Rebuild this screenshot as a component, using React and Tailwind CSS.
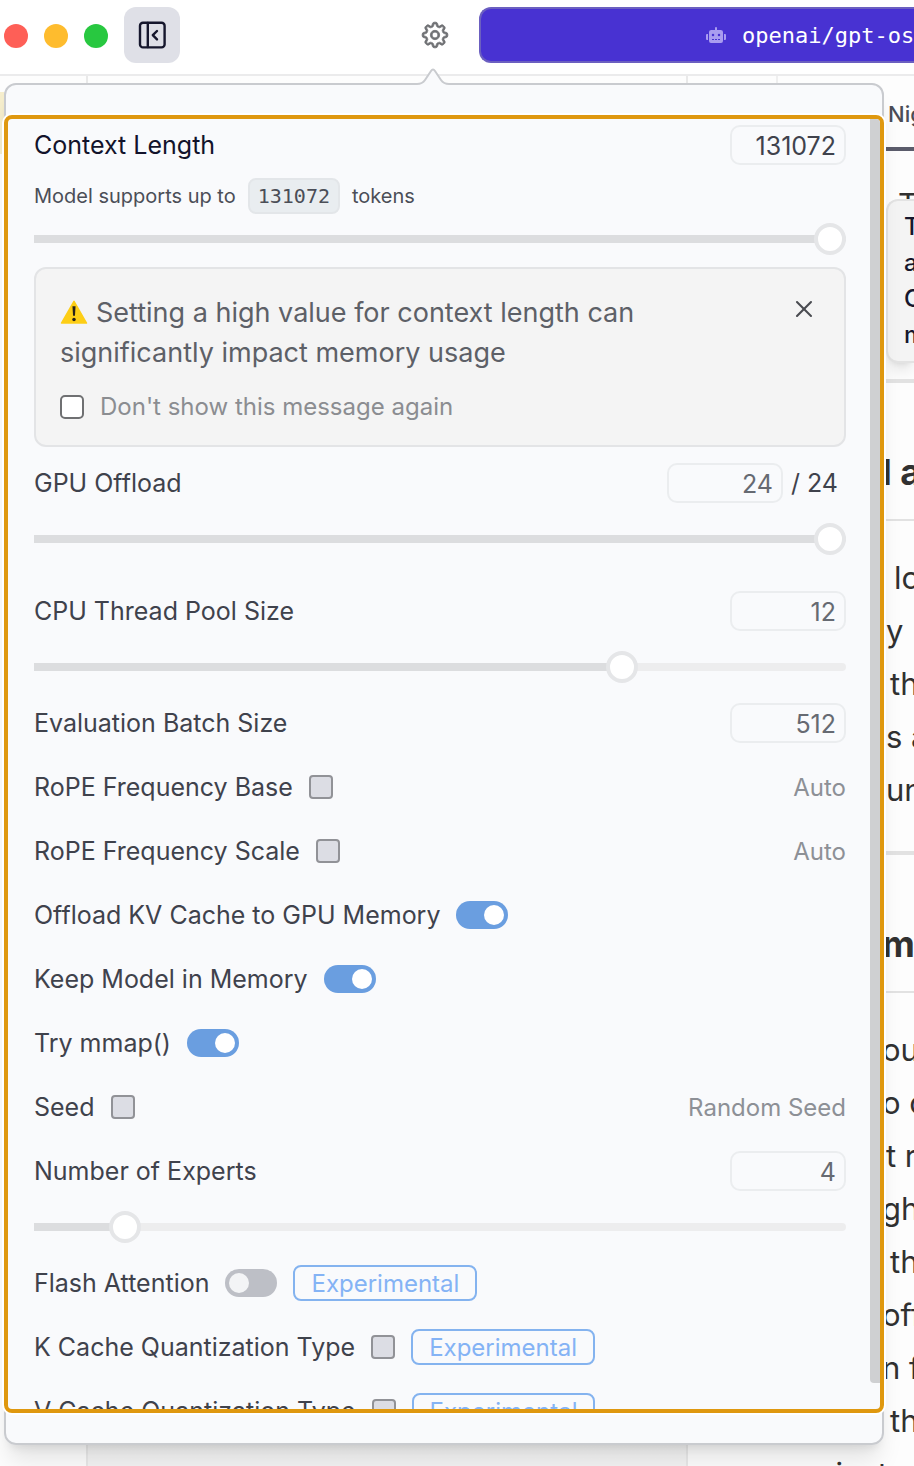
import React, { useState } from 'react';
import { X } from 'lucide-react';
import { GoGear } from 'react-icons/go';
import { FaRobot } from 'react-icons/fa';

const documentLines = [
    { text: 'lo', indent: 'pl-3' },
    { text: 'y', indent: 'pl-1' },
    { text: 'th', indent: 'pl-2' },
    { text: 's a', indent: 'pl-1' },
    { text: 'un', indent: 'pl-1' },
];

const answerLines = [
    { text: 'ou', indent: 'pl-0' },
    { text: 'o c', indent: 'pl-0' },
    { text: 't r', indent: 'pl-1' },
    { text: 'gh', indent: 'pl-0' },
    { text: 'th', indent: 'pl-2' },
    { text: 'off', indent: 'pl-0' },
    { text: 'n f', indent: 'pl-0' },
    { text: 'th', indent: 'pl-2' },
];

const SidebarIcon = () => (
    <svg viewBox="0 0 28 28" className="size-7" fill="none" stroke="currentColor" strokeWidth="2.4" strokeLinecap="round" strokeLinejoin="round">
        <rect x="2" y="1.8" width="24.6" height="24.6" rx="3" />
        <path d="M9.8 2v24M19 10l-4.2 4.2 4.2 4.2" />
    </svg>
);

const WarningIcon = () => (
    <svg viewBox="0 0 28 25" className="mr-2 inline h-6 w-7 align-[-2px]" aria-hidden="true">
        <path d="M14 1.4 27 24H1Z" fill="#fdce16" stroke="#fdce16" strokeWidth="1.6" strokeLinejoin="round" />
        <path d="M12.4 6.5h3.2l-.6 10h-2z" fill="#26211a" />
        <circle cx="14" cy="20.3" r="1.8" fill="#26211a" />
    </svg>
);

const NumberBox = ({ id, label, value, onChange, dark }) => (
    <input
        id={id}
        aria-label={label}
        inputMode="numeric"
        value={value}
        onChange={(e) => onChange(e.target.value)}
        className={`h-10 w-[116px] rounded-[10px] border-2 border-[#ebedef] bg-transparent px-2 pt-0.5 text-right text-[25px] ${dark ? 'text-[#3f424c]' : 'text-[#666a72]'}`}
    />
);

const Slider = ({ label, min, max, value, onChange }) => {

    const fill = ((value - min) / (max - min)) * 100;

    return (
        <input
            type="range"
            aria-label={label}
            min={min}
            max={max}
            value={value}
            onChange={(e) => onChange(Number(e.target.value))}
            style={{ '--fill': `${fill}%` }}
            className="block h-6 w-full appearance-none bg-transparent [&::-webkit-slider-runnable-track]:h-2 [&::-webkit-slider-runnable-track]:rounded-r-sm [&::-webkit-slider-runnable-track]:bg-[linear-gradient(to_right,#dcdddf_var(--fill),#ededee_var(--fill))] [&::-webkit-slider-thumb]:-mt-3 [&::-webkit-slider-thumb]:size-8 [&::-webkit-slider-thumb]:appearance-none [&::-webkit-slider-thumb]:rounded-full [&::-webkit-slider-thumb]:border-4 [&::-webkit-slider-thumb]:border-[#e5e6e8] [&::-webkit-slider-thumb]:bg-white"
        />
    );
};

const Row = ({ id, label, labelClass = 'text-[#3f424c]', extra, children }) => (
    <div className="flex h-10 items-center gap-4">
        <label htmlFor={id} className={`pt-0.5 text-[25px] ${labelClass}`}>
            {label}
        </label>
        {extra}
        <div className="ml-auto flex items-center">{children}</div>
    </div>
);

const Checkbox = ({ id }) => (
    <input
        type="checkbox"
        id={id}
        className="size-6 appearance-none rounded-sm border-2 border-[#919297] bg-[#dcdde4] checked:bg-[#6a9ee0]"
    />
);

const Toggle = ({ id, defaultChecked }) => (
    <input
        type="checkbox"
        role="switch"
        id={id}
        defaultChecked={defaultChecked}
        className="flex h-7 w-[52px] appearance-none items-center rounded-full bg-[#bdbfc6] px-1 before:size-5 before:rounded-full before:bg-[#f3f4f6] checked:justify-end checked:bg-[#6a9ee0] checked:before:bg-white"
    />
);

const Experimental = () => (
    <span className="flex h-9 items-center rounded-lg border-2 border-[#84b3ef] px-4 pt-0.5 text-2xl text-[#84b3f5]">
        Experimental
    </span>
);

const Auto = ({ children }) => (
    <span className="pt-0.5 text-2xl text-[#8d9096]">{children}</span>
);

const SettingsPanel = () => {

    const [contextLength, setContextLength] = useState(131072);
    const [gpuOffload, setGpuOffload] = useState(24);
    const [threads, setThreads] = useState(12);
    const [batchSize, setBatchSize] = useState(512);
    const [experts, setExperts] = useState(4);
    const [showWarning, setShowWarning] = useState(true);

    return (
        <div className="flex min-w-0 flex-1 flex-col gap-4 pt-1.5 pr-6 pl-[26px]">

            <div className="flex flex-col gap-[13px]">
                <Row id="context" label="Context Length" labelClass="text-[#12132b]">
                    <NumberBox id="context" value={contextLength} onChange={setContextLength} dark />
                </Row>
                <p className="flex h-9 items-center text-xl text-[#4b4e57]">
                    Model supports up to
                    <code className="mx-3 flex h-9 items-center rounded-lg border-2 border-[#e3e6e9] bg-[#e9edf0] px-2 font-['DejaVu_Sans_Mono',monospace] text-xl">
                        131072
                    </code>
                    tokens
                </p>
                <Slider label="Context Length" min={1} max={131072} value={contextLength} onChange={setContextLength} />
            </div>

            {showWarning && (
                <div className="flex items-start justify-between rounded-xl border-2 border-[#e3e4e6] bg-[#f4f4f4] px-6 pt-6 pb-5">
                    <div className="max-w-[620px]">
                        <p className="text-[27px] leading-10 text-[#5d6067]">
                            <WarningIcon />
                            Setting a high value for context length can significantly impact memory usage
                        </p>
                        <label className="mt-4 flex h-9 items-center gap-4 text-2xl text-[#8b8d91]">
                            <input type="checkbox" className="size-6 appearance-none rounded-[5px] border-2 border-[#6f7072] bg-white checked:bg-[#6a9ee0]" />
                            Don't show this message again
                        </label>
                    </div>
                    <button type="button" aria-label="Close" onClick={() => setShowWarning(false)} className="p-0.5 text-[#494b50]">
                        <X className="size-7" strokeWidth={1.75} />
                    </button>
                </div>
            )}

            <div className="flex flex-col gap-6">
                <Row id="gpu" label="GPU Offload">
                    <NumberBox id="gpu" value={gpuOffload} onChange={setGpuOffload} />
                    <span className="px-2 pt-0.5 text-[25px] text-[#3f424c]">/ 24</span>
                </Row>
                <Slider label="GPU Offload" min={0} max={24} value={gpuOffload} onChange={setGpuOffload} />
                <div className="flex flex-col gap-6 pt-4">
                    <Row id="threads" label="CPU Thread Pool Size">
                        <NumberBox id="threads" value={threads} onChange={setThreads} />
                    </Row>
                    <Slider label="CPU Thread Pool Size" min={1} max={16} value={threads} onChange={setThreads} />
                </div>
                <Row id="batch" label="Evaluation Batch Size">
                    <NumberBox id="batch" value={batchSize} onChange={setBatchSize} />
                </Row>
                <Row id="rope-base" label="RoPE Frequency Base" extra={<Checkbox id="rope-base" />}>
                    <Auto>Auto</Auto>
                </Row>
                <Row id="rope-scale" label="RoPE Frequency Scale" extra={<Checkbox id="rope-scale" />}>
                    <Auto>Auto</Auto>
                </Row>
                <Row id="kv" label="Offload KV Cache to GPU Memory" extra={<Toggle id="kv" defaultChecked />} />
                <Row id="keep" label="Keep Model in Memory" extra={<Toggle id="keep" defaultChecked />} />
                <Row id="mmap" label="Try mmap()" extra={<Toggle id="mmap" defaultChecked />} />
                <Row id="seed" label="Seed" extra={<Checkbox id="seed" />}>
                    <Auto>Random Seed</Auto>
                </Row>
                <Row id="experts" label="Number of Experts">
                    <NumberBox id="experts" value={experts} onChange={setExperts} />
                </Row>
                <Slider label="Number of Experts" min={1} max={32} value={experts} onChange={setExperts} />
                <Row id="flash" label="Flash Attention" extra={<><Toggle id="flash" /><Experimental /></>} />
                <Row id="k-cache" label="K Cache Quantization Type" extra={<><Checkbox id="k-cache" /><Experimental /></>} />
                <Row id="v-cache" label="V Cache Quantization Type" extra={<><Checkbox id="v-cache" /><Experimental /></>} />
            </div>

        </div>
    );
};

const Header = () => (
    <header className="flex h-[76px] shrink-0 items-center border-b-2 border-[#ebebec] bg-white pb-1 pl-1">
        <div className="flex gap-4 pt-0.5">
            <span className="size-6 rounded-full bg-[#fe5f57]" />
            <span className="size-6 rounded-full bg-[#febc2e]" />
            <span className="size-6 rounded-full bg-[#28c840]" />
        </div>
        <button type="button" aria-label="Toggle sidebar" className="ml-4 flex size-14 items-center justify-center rounded-xl bg-[#dfe0e7] text-[#16172d]">
            <SidebarIcon />
        </button>
        <button type="button" aria-label="Model settings" className="mr-[30px] ml-auto text-[#6f7174]">
            <GoGear className="size-7" stroke="currentColor" strokeWidth="0.7" />
        </button>
        <button type="button" className="flex h-14 w-[435px] items-center overflow-hidden rounded-l-xl border-2 border-r-0 border-[#6b5fc0] bg-[#4832d2] pl-[225px] font-['DejaVu_Sans_Mono',monospace] text-[22px] whitespace-nowrap text-white">
            <FaRobot className="mr-4 size-5 shrink-0 text-[#a99cf0]" />
            openai/gpt-os
        </button>
    </header>
);

const Line = ({ text, indent }) => (
    <p className={`${indent} h-[53px] whitespace-nowrap`}>{text}</p>
);

const ChatBackground = () => (
    <main className="flex min-h-0 flex-1 overflow-hidden bg-[#fdfdfd]">
        <div className="w-[86px] shrink-0 pt-4">
            <div className="h-[62px] w-2 bg-[#f6eecd]" />
        </div>
        <div className="min-w-0 flex-1 border-x-2 border-[#e9e9e9] bg-linear-to-b from-[#fdfdfd] to-[#f4f4f4]" />
        <div className="flex w-[226px] shrink-0 justify-between overflow-hidden text-[#313131]">
            <div className="h-10 w-[90px] shrink-0 border-r-2 border-[#efefef]" />
            <div className="w-8 text-[31px] leading-[53px]">
                <p className="pt-5 pl-1.5 text-[22px] leading-9 font-medium whitespace-nowrap text-[#4b4d57]">Nig</p>
                <div className="mt-[15px] h-1 bg-[#5b5c6b]" />
                <p className="h-12 overflow-hidden pt-[34px] pl-4 leading-10">T</p>
                <div className="ml-1 rounded-l-xl border-2 border-r-0 border-[#e3e3e3] bg-[#f4f4f4] py-2 pl-4 text-2xl leading-9 font-medium text-[#16172d] shadow-lg">
                    <p>T</p>
                    <p>a</p>
                    <p>O</p>
                    <p>m</p>
                </div>
                <div className="mt-4 h-1 bg-[#e2e2e2]" />
                <h2 className="mt-[64px] text-[36px] leading-[50px] font-bold whitespace-nowrap">l a</h2>
                <div className="mt-[22px] mb-[30px] h-0.5 bg-[#e2e2e2]" />
                {documentLines.map((line, i) => <Line key={i} {...line} />)}
                <div className="mt-[35px] h-1 bg-[#e2e2e2]" />
                <h2 className="mt-[64px] text-[36px] leading-[50px] font-bold">m</h2>
                <div className="mt-[22px] mb-[30px] h-0.5 bg-[#e2e2e2]" />
                {answerLines.map((line, i) => <Line key={i} {...line} />)}
                <p className="flex justify-end whitespace-nowrap">against a</p>
            </div>
        </div>
    </main>
);

const App = () => {

    return (

        <div className="relative flex h-screen flex-col overflow-hidden bg-white font-[Inter,sans-serif]">

            <Header />
            <ChatBackground />

            {/* Model settings popover */}
            <section className="absolute top-[83px] right-[30px] bottom-[21px] left-1 flex flex-col rounded-xl bg-[#f9fafc] shadow-xl">

                <div className="pointer-events-none absolute inset-0 rounded-xl border-2 border-[#c9cbcf]" />
                <svg viewBox="0 0 32 18" className="absolute -top-[15px] left-[413px] h-[18px] w-8">
                    <path d="M0 16c4 0 6-1 8-4l6-9q2-3 4 0l6 9c2 3 4 4 8 4v2H0z" fill="#f9fafc" />
                    <path d="M0 16c4 0 6-1 8-4l6-9q2-3 4 0l6 9c2 3 4 4 8 4" fill="none" stroke="#c9cbcf" strokeWidth="2" />
                </svg>

                <div className="relative mt-8 mb-8 flex min-h-0 flex-1 overflow-hidden rounded-lg border-4 border-[#df980f] bg-[#f9fafc] ring-2 ring-white">
                    <SettingsPanel />
                    <div className="h-[98%] w-[10px] shrink-0 rounded-bl-sm bg-[#cfd0d2]" />
                </div>

            </section>

        </div>

    );

};

export default App;
